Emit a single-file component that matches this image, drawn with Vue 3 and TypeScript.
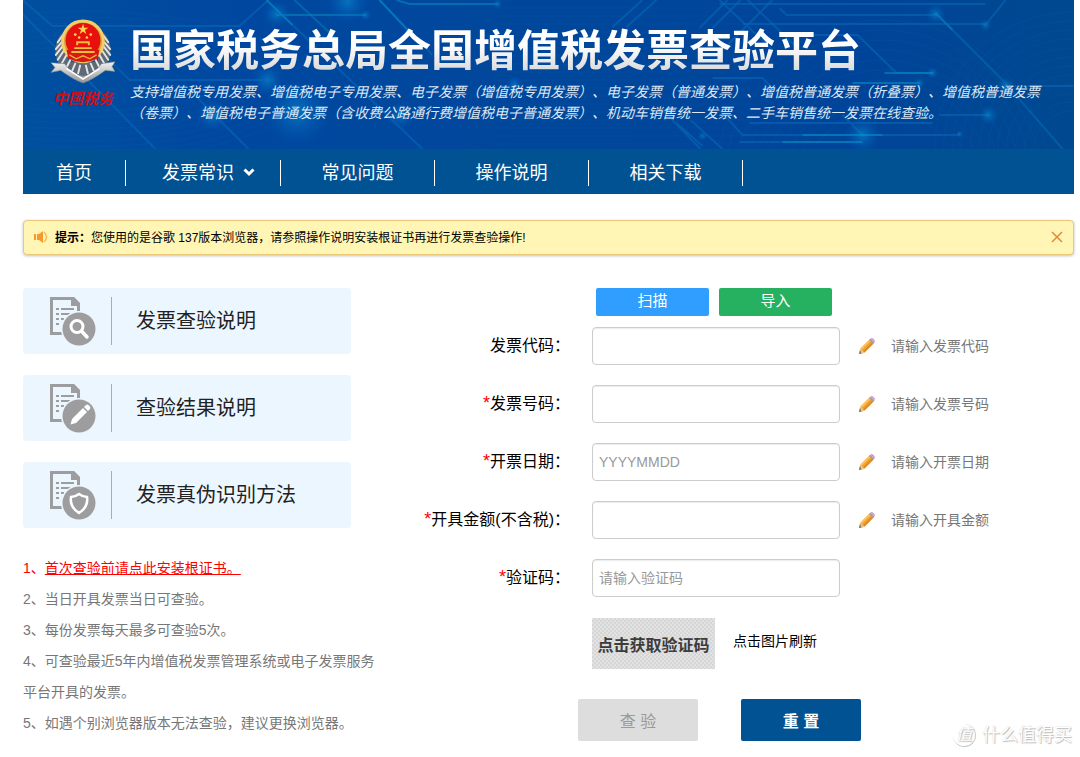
<script setup lang="ts">
import { ref } from 'vue'

interface NavItem { label: string; menu?: boolean }
interface Guide { label: string; icon: 'search' | 'edit' | 'shield' }
interface Field { id: string; label: string; required: boolean; placeholder: string; hint: string }

const navItems: NavItem[] = [
  { label: '首页' },
  { label: '发票常识', menu: true },
  { label: '常见问题' },
  { label: '操作说明' },
  { label: '相关下载' },
]

const guides: Guide[] = [
  { label: '发票查验说明', icon: 'search' },
  { label: '查验结果说明', icon: 'edit' },
  { label: '发票真伪识别方法', icon: 'shield' },
]

const notes: string[] = [
  '2、当日开具发票当日可查验。',
  '3、每份发票每天最多可查验5次。',
  '4、可查验最近5年内增值税发票管理系统或电子发票服务平台开具的发票。',
  '5、如遇个别浏览器版本无法查验，建议更换浏览器。',
]

const fields: Field[] = [
  { id: 'code', label: '发票代码', required: false, placeholder: '', hint: '请输入发票代码' },
  { id: 'number', label: '发票号码', required: true, placeholder: '', hint: '请输入发票号码' },
  { id: 'date', label: '开票日期', required: true, placeholder: 'YYYYMMDD', hint: '请输入开票日期' },
  { id: 'amount', label: '开具金额(不含税)', required: true, placeholder: '', hint: '请输入开具金额' },
  { id: 'captcha', label: '验证码', required: true, placeholder: '请输入验证码', hint: '' },
]

const values = ref<Record<string, string>>({ code: '', number: '', date: '', amount: '', captcha: '' })
const showTip = ref(true)

function reset(): void {
  for (const f of fields) values.value[f.id] = ''
}
</script>

<template>
  <div class="page">
    <header class="header">
      <div class="banner">
        <svg class="circuit" viewBox="0 0 1052 149" preserveAspectRatio="xMidYMid slice" aria-hidden="true">
          <defs>
            <linearGradient id="sky" x1="0" y1="0" x2="1" y2="0">
              <stop offset="0" stop-color="#00509f" />
              <stop offset="0.2" stop-color="#0047a0" />
              <stop offset="0.55" stop-color="#00479b" />
              <stop offset="0.8" stop-color="#004499" />
              <stop offset="1" stop-color="#00498f" />
            </linearGradient>
            <radialGradient id="glow">
              <stop offset="0" stop-color="#0c8fd0" stop-opacity="0.6" />
              <stop offset="1" stop-color="#0060c0" stop-opacity="0" />
            </radialGradient>
          </defs>
          <rect width="1052" height="149" fill="url(#sky)" />
          <g fill="none" stroke="#0a5fb0" stroke-opacity="0.22">
            <circle v-for="n in 12" :key="'r' + n" cx="1050" cy="150" :r="30 + n * 9" />
            <circle v-for="n in 10" :key="'m' + n" cx="860" cy="190" :r="70 + n * 10" />
            <ellipse v-for="n in 9" :key="'l' + n" cx="60" cy="85" :rx="120 + n * 12" :ry="20 + n * 6" />
            <path v-for="n in 18" :key="'h' + n" :d="`M470 ${n * 8}H730`" />
          </g>
          <g fill="none" stroke="#0668b8" stroke-width="2" stroke-opacity="0.6">
            <path d="M0 0 30 26H217L246 0M0 14 133 149M87 60 107 80H240M175 98 226 149M244 0 400 149" />
            <path d="M357 0 410 55M590 27 620 0M604 27 634 0M677 28 705 0M690 28 718 0M697 0 750 50M725 0 775 48M750 0 700 50M640 110 678 149M654 123 680 146M668 120 700 149" />
            <path d="M697 4H963M757 8 764 15H913M720 24H963M787 35H835L874 73H910M913 13 983 83 1040 149M983 0 963 25M983 86H1052" />
            <path d="M690 78H740L752 90M830 83H897M727 123H910M917 115H966M697 110 720 135H937M717 142H840M820 115 840 135" />
          </g>
          <g fill="none" stroke="#0693bf" stroke-width="2" stroke-opacity="0.5">
            <path d="M254 15H343M374 0 387 4H475M244 0 270 25M357 0 385 30M780 135H860M760 142H840M862 73H910" />
            <path d="M913 13 930 30M830 83H897M272 0 315 40" stroke-opacity="0.4" />
          </g>
          <g fill="url(#glow)">
            <circle cx="254" cy="14" r="14" /><circle cx="245" cy="80" r="16" />
            <circle cx="275" cy="112" r="34" /><circle cx="190" cy="115" r="16" />
            <circle cx="325" cy="2" r="22" /><circle cx="343" cy="15" r="6" />
            <circle cx="475" cy="4" r="5" /><circle cx="492" cy="85" r="9" />
            <circle cx="378" cy="115" r="14" /><circle cx="913" cy="14" r="10" />
            <circle cx="963" cy="25" r="6" /><circle cx="910" cy="73" r="6" />
            <circle cx="966" cy="115" r="10" /><circle cx="897" cy="83" r="6" />
            <circle cx="840" cy="135" r="18" /><circle cx="680" cy="136" r="5" />
            <circle cx="983" cy="86" r="9" /><circle cx="937" cy="134" r="4" />
          </g>
        </svg>
        <div class="brand">
          <svg class="emblem" viewBox="0 0 68 70" aria-hidden="true">
            <defs>
              <linearGradient id="silver" x1="0" y1="0" x2="0" y2="1">
                <stop offset="0" stop-color="#f4f4f2" /><stop offset="1" stop-color="#8f9499" />
              </linearGradient>
            </defs>
            <path d="M13 15C3 24 4 42 11 49Q19 59 34 62Q49 59 57 49C64 42 65 24 55 15L49 45H19Z" fill="#5f6a76" />
            <g fill="none" stroke="#e4e5e4" stroke-width="2" stroke-linecap="round">
              <path d="M13 18 8 25M12 25 6 32M13 29 6 38M14 34 8 43M17 38 12 47M21 43 17 51M26 47 23 54M31 49 29 57" />
              <path d="M55 18 60 25M56 25 62 32M55 29 62 38M54 34 60 43M51 38 56 47M47 43 51 51M42 47 45 54M37 49 39 57" />
            </g>
            <path d="M1 46 15 47Q22 58 34 60Q46 58 53 47L67 45 64 50 67 55 57 54Q43 64 34 67Q25 64 11 54L1 56 5 51Z" fill="url(#silver)" stroke="#777e85" stroke-width="0.6" />
            <path d="M17 52 34 63 51 52" fill="none" stroke="#fff" stroke-width="1.6" />
            <circle cx="34" cy="24" r="21" fill="#d4a239" stroke="#f4cf69" stroke-width="3" />
            <circle cx="34" cy="23" r="18" fill="#e8100c" />
            <path d="M17 33Q34 28 51 33L49 42Q34 49 19 42Z" fill="#d81812" />
            <path d="M34 6 35.3 10H39.5L36 12.4 37.4 16.5 34 14 30.6 16.5 32 12.4 28.5 10H32.7Z" fill="#ffd34d" />
            <g fill="#ffd34d"><circle cx="26" cy="17" r="1.4" /><circle cx="42" cy="17" r="1.4" /><circle cx="30" cy="20" r="1.3" /><circle cx="38" cy="20" r="1.3" /></g>
            <path d="M28 28V25H40V28M25 31H43M22 35H46" fill="none" stroke="#f3bd3e" stroke-width="2" />
            <path d="M20 38 27 42 34 39 41 42 48 38" fill="none" stroke="#edb238" stroke-width="1.5" />
          </svg>
          <span class="script">中国税务</span>
        </div>
        <div class="headline">
          <h1>国家税务总局全国增值税发票查验平台</h1>
          <p>支持增值税专用发票、增值税电子专用发票、电子发票（增值税专用发票）、电子发票（普通发票）、增值税普通发票（折叠票）、增值税普通发票<br>（卷票）、增值税电子普通发票（含收费公路通行费增值税电子普通发票）、机动车销售统一发票、二手车销售统一发票在线查验。</p>
        </div>
      </div>
      <nav class="nav">
        <a v-for="item in navItems" :key="item.label" href="#" :class="{ menu: item.menu }">
          {{ item.label }}
          <svg v-if="item.menu" viewBox="0 0 12 9" aria-hidden="true"><path d="M1.5 1.5 6 6 10.5 1.5" /></svg>
        </a>
      </nav>
    </header>

    <div v-if="showTip" class="tip" role="status">
      <svg class="horn" viewBox="0 0 14 12" aria-hidden="true">
        <path d="M0 3H2V9H0ZM3 3H5L9 0V12L5 9H3Z" fill="#f79a2c" />
        <path d="M10 1Q15 6 10 11" fill="none" stroke="#f9b95c" stroke-width="1.500" />
      </svg>
      <p><strong>提示：</strong>您使用的是谷歌 137版本浏览器，请参照操作说明安装根证书再进行发票查验操作!</p>
      <button type="button" class="close" aria-label="关闭" @click="showTip = false">
        <svg viewBox="0 0 12 12" aria-hidden="true"><path d="M1 1 11 11M11 1 1 11" /></svg>
      </button>
    </div>

    <main class="content">
      <aside class="side">
        <a v-for="g in guides" :key="g.label" href="#" class="guide">
          <svg class="guide-icon" viewBox="0 0 46 49" aria-hidden="true">
            <path d="M14 36.500H1.500V1.500H23L28.500 7V14" fill="none" stroke="#9d9d9f" stroke-width="3" />
            <path d="M21 0V9H30V6L24 0Z" fill="#9d9d9f" />
            <path d="M6 12H9M11 12H24M6 17H9M11 17H20M6 22H9M11 22H14M6 27H9" fill="none" stroke="#9d9d9f" stroke-width="2" />
            <circle cx="29" cy="32" r="18" fill="#ecf6ff" />
            <circle cx="29" cy="32" r="16.500" fill="#9d9d9f" />
            <g v-if="g.icon === 'search'" fill="none" stroke="#fff">
              <circle cx="27" cy="29.500" r="6" stroke-width="3" />
              <path d="M31.500 34 37 40" stroke-width="3.500" stroke-linecap="round" />
            </g>
            <g v-else-if="g.icon === 'edit'" fill="#fff">
              <path d="M20.500 40.500 22 35 33 24 37 28 26 39Z" />
              <path d="M34 23 36 21Q37.500 20 39 21.500L40 22.500Q41 24 39.500 25.500L38 27Z" />
            </g>
            <path v-else d="M29 23Q33 26 37 26Q38.500 36 29 42Q19.500 36 21 26Q25 26 29 23Z" fill="none" stroke="#fff" stroke-width="2.500" />
          </svg>
          <span>{{ g.label }}</span>
        </a>
        <div class="notes">
          <p class="alert">1、<a href="#">首次查验前请点此安装根证书。</a></p>
          <p v-for="n in notes" :key="n">{{ n }}</p>
        </div>
      </aside>

      <form class="form" @submit.prevent>
        <div class="quick">
          <button type="button" class="scan">扫描</button>
          <button type="button" class="import">导入</button>
        </div>
        <div v-for="f in fields" :key="f.id" class="row">
          <label :for="f.id"><span v-if="f.required" class="star">*</span>{{ f.label }}：</label>
          <input :id="f.id" v-model="values[f.id]" type="text" :placeholder="f.placeholder">
          <span v-if="f.hint" class="hint">
            <svg viewBox="0 0 16 16" aria-hidden="true">
              <path d="M0 16 1 11.500 4.500 15Z" fill="#6b5a43" />
              <path d="M1 11.500 2 10 6 14 4.500 15 2 15.500Z" fill="#e8c48e" />
              <path d="M1.500 10.500 10.500 1.500 14.500 5.500 5.500 14.500Z" fill="#f3a02c" />
              <path d="M1.500 10.500 10.500 1.500 11.800 2.800 2.800 11.800Z" fill="#ffc35e" />
              <path d="M4.200 13.200 13.200 4.200 14.500 5.500 5.500 14.500Z" fill="#d98a2a" />
              <path d="M10 2 11.500.5 15.500 4.500 14 6Z" fill="#9ba4ad" />
              <path d="M11.500.5Q13-.5 14.500 1Q16.500 2.500 15.500 4.500Z" fill="#d994cb" />
            </svg>
            {{ f.hint }}
          </span>
        </div>
        <div class="captcha">
          <button type="button">点击获取验证码</button>
          <span>点击图片刷新</span>
        </div>
        <div class="actions">
          <button type="submit" class="check" disabled>查 验</button>
          <button type="button" class="reset" @click="reset">重 置</button>
        </div>
      </form>
    </main>

    <div class="mark"><span class="mark-logo">值</span>什么值得买</div>
  </div>
</template>

<style>
body { margin: 0; background: #fff; }
</style>

<style scoped>
.page {
  position: relative;
  box-sizing: border-box;
  min-height: 100vh;
  padding: 0 6px 0 23px;
  font-family: "Liberation Sans", "Noto Sans CJK SC", sans-serif;
  font-size: 14px;
  color: #000;
}
h1, p { margin: 0; }
a { color: inherit; text-decoration: none; }
button, input { font: inherit; box-sizing: border-box; }
button { border: 0; padding: 0; cursor: pointer; }
.banner {
  position: relative;
  display: flex;
  gap: 14px;
  height: 149px;
  padding-left: 27px;
  overflow: hidden;
}
.circuit { position: absolute; inset: 0; width: 100%; height: 100%; }
.brand {
  position: relative;
  display: flex;
  flex-direction: column;
  align-items: center;
  width: 66px;
  padding-top: 18px;
}
.emblem { width: 66px; height: 68px; }
.script {
  font-family: "Noto Sans CJK SC", sans-serif;
  font-style: italic;
  font-weight: 700;
  font-size: 15px;
  line-height: 24px;
  color: #d00d16;
  white-space: nowrap;
}
.headline { position: relative; flex: 1; padding-top: 20px; white-space: nowrap; }
h1 {
  width: max-content;
  font-size: 43px;
  line-height: 62px;
  font-weight: 700;
  background: linear-gradient(#fff 40%, #dcdcdc 80%);
  background-clip: text;
  color: transparent;
}
.headline p { font-style: italic; font-size: 14px; line-height: 21px; color: #dce8f5; text-spacing-trim: space-all; }
.nav {
  display: flex;
  align-items: center;
  box-sizing: border-box;
  height: 45px;
  padding-top: 2px;
  background: #005293;
}
.nav a {
  box-sizing: border-box;
  width: 154px;
  border-right: 1px solid #fff;
  font-size: 18px;
  line-height: 26px;
  color: #fff;
  text-align: center;
}
.nav a:first-child { width: 103px; }
.nav .menu { display: flex; align-items: center; gap: 9px; width: 155px; padding-left: 36px; }
.nav svg { width: 12px; height: 9px; }
.nav path { fill: none; stroke: #fff; stroke-width: 3; }
.tip {
  display: flex;
  align-items: center;
  box-sizing: border-box;
  height: 35px;
  margin-top: 26px;
  padding: 0 10px 2px;
  border: 1px solid #eac878;
  border-radius: 4px;
  background: #fff6b5;
  box-shadow: 0 1px 3px rgba(0, 0, 0, 0.25);
  font-size: 12px;
}
.tip p { flex: 1; }
.horn { width: 14px; height: 12px; margin-right: 7px; }
.close { display: flex; background: none; }
.close svg { width: 12px; height: 12px; }
.close path { fill: none; stroke: #e3883c; stroke-width: 1.5; }
.content { display: flex; gap: 24px; margin-top: 33px; }
.side { width: 362px; flex: none; }
.guide {
  display: flex;
  align-items: center;
  width: 328px;
  height: 66px;
  margin-bottom: 21px;
  border-radius: 4px;
  background: #ecf6ff;
  font-size: 20px;
  color: #222;
}
.guide-icon { width: 46px; height: 49px; margin: 0 15px 0 27px; }
.guide span { padding-left: 24px; border-left: 1px solid #a8adb2; line-height: 48px; }
.notes { padding-top: 4px; line-height: 31px; color: #777; }
.notes .alert { color: #f00; }
.notes a { text-decoration: underline; }
.form { flex: 1; min-width: 0; white-space: nowrap; }
.quick { display: flex; gap: 10px; padding-left: 187px; margin-bottom: 11px; }
.quick button { width: 113px; height: 28px; border-radius: 2px; font-size: 15px; line-height: 26px; padding-bottom: 2px; color: #fff; }
.scan { background: #309eff; }
.import { background: #25b15f; }
.row { display: flex; align-items: center; margin-bottom: 20px; }
.row label { width: 161px; margin-right: 22px; text-align: right; font-size: 16px; line-height: 36px; }
.star { color: #f00; font-size: 18px; line-height: 16px; }
.row input {
  width: 248px;
  height: 38px;
  padding: 0 6px;
  border: 1px solid #ccc;
  border-radius: 4px;
  background: #fff;
  box-shadow: inset 0 1px 1px rgba(0, 0, 0, 0.08);
  color: #333;
}
.row input::placeholder { color: #999; opacity: 1; }
.hint { display: flex; align-items: center; gap: 16px; margin-left: 19px; color: #777; line-height: 36px; }
.hint svg { width: 16px; height: 16px; }
.captcha { display: flex; gap: 18px; padding-left: 183px; margin-top: 21px; }
.captcha button {
  width: 123px;
  height: 51px;
  background: repeating-conic-gradient(#d6d6d6 0 25%, #e2e2e2 0 50%) 0 0 / 4px 4px;
  font-family: "Noto Sans CJK SC", serif;
  font-size: 16px;
  font-weight: 700;
  color: #3c3c3c;
}
.captcha span { line-height: 46px; }
.actions { display: flex; gap: 43px; margin-top: 30px; padding-left: 169px; }
.actions button { width: 120px; height: 42px; border-radius: 2px; font-size: 16px; }
.check { background: #ddd; color: #999; }
.reset { background: #005293; color: #fff; font-weight: 700; }
.mark {
  position: absolute;
  right: 8px;
  bottom: 10px;
  display: flex;
  align-items: center;
  gap: 6px;
  font-size: 18px;
  line-height: 24px;
  color: #fff;
  text-shadow: 1px 1px 1px #bbb, 0 0 1px #ccc;
}
.mark-logo {
  width: 22px;
  border-right: 1px solid #ccc;
  border-bottom: 1px solid #ccc;
  border-radius: 50%;
  font-size: 16px;
  line-height: 22px;
  font-style: italic;
  text-align: center;
}
</style>
